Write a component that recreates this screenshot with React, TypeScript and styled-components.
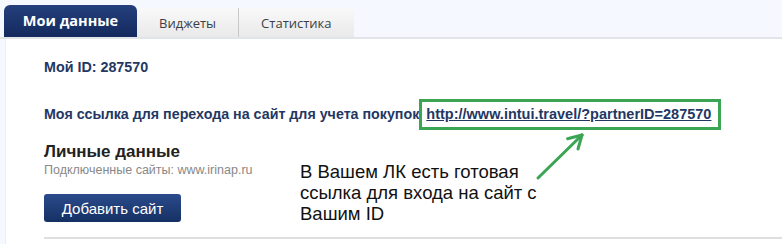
import React from "react";
import styled, { createGlobalStyle } from "styled-components";

const Global = createGlobalStyle`
  html, body { margin: 0; padding: 0; background: #f5f8fe; }
  body { font-family: Arial, "Liberation Sans", sans-serif; }
`;

const Page = styled.div`
  position: relative;
  width: 782px;
  height: 244px;
  overflow: hidden;
  background: #f5f8fe;
`;

const TabBar = styled.div`
  display: flex;
  align-items: flex-end;
  height: 37px;
  padding-left: 4px;
  border-bottom: 2px solid #e1e4e9;
`;

const Tab = styled.div<{ $active?: boolean; $sep?: boolean }>`
  display: flex;
  align-items: center;
  justify-content: center;
  box-sizing: border-box;
  font-family: "Open Sans", "Liberation Sans", sans-serif;
  font-size: ${(p) => (p.$active ? "14.5px" : "13px")};
  height: ${(p) => (p.$active ? "32px" : "29px")};
  padding-bottom: ${(p) => (p.$active ? "1px" : "0")};
  width: ${(p) => (p.$active ? "133px" : "auto")};
  padding-left: ${(p) => (p.$active ? "0" : "22px")};
  padding-right: ${(p) => (p.$active ? "0" : "22px")};
  border-radius: ${(p) => (p.$active ? "6px 6px 0 0" : "0")};
  font-weight: ${(p) => (p.$active ? 700 : 400)};
  color: ${(p) => (p.$active ? "#ffffff" : "#3b3f45")};
  background: ${(p) =>
    p.$active
      ? "linear-gradient(#243f7c, #142a5e)"
      : "linear-gradient(#f9f9f9, #e9e9e9)"};
  border-right: ${(p) => (p.$sep ? "1px solid #c9c9c9" : "none")};
`;

const Panel = styled.div`
  margin-left: 5px;
  background: #ffffff;
  height: 205px;
  padding-left: 38px;
  box-sizing: border-box;
  border-left: 1px solid #eceef3;
`;

const IdLine = styled.div`
  padding-top: 20px;
  font-size: 14.3px;
  font-weight: 700;
  color: #233763;
  line-height: 16px;
`;

const LinkRow = styled.div`
  display: flex;
  align-items: center;
  gap: 0;
  margin-top: 24px;
  font-size: 14.25px;
  font-weight: 700;
  color: #233763;
  line-height: 17px;
`;

const Highlight = styled.span`
  border: 3px solid #3ba553;
  padding: 4px 7px 4px 4px;
  font-size: 14.5px;
  line-height: 17px;
`;

const PartnerLink = styled.a`
  color: #233763;
  text-decoration: underline;
`;

const SectionTitle = styled.div`
  margin-top: 12px;
  font-size: 17px;
  font-weight: 700;
  color: #222;
  line-height: 20px;
`;

const Sites = styled.div`
  font-size: 12.5px;
  color: #888;
  line-height: 15px;
  margin-top: 1px;
`;

const Button = styled.button`
  margin-top: 16px;
  width: 137px;
  height: 28px;
  border: none;
  border-radius: 3px;
  background: linear-gradient(#2a4b8c, #163063);
  color: #fff;
  font-family: Arial, "Liberation Sans", sans-serif;
  font-size: 15px;
  padding: 0;
  display: block;
`;

const Divider = styled.div`
  margin-top: 15px;
  height: 2px;
  background: #dedede;
`;

const Note = styled.div`
  position: absolute;
  left: 300px;
  top: 161px;
  font-family: Arial, "Liberation Sans", sans-serif;
  font-size: 18.5px;
  line-height: 21px;
  color: #111;
`;

const Arrow = styled.svg`
  position: absolute;
  left: 530px;
  top: 125px;
`;

export default function App() {
  return (
    <Page>
      <Global />
      <TabBar>
        <Tab $active>Мои данные</Tab>
        <Tab $sep>Виджеты</Tab>
        <Tab>Статистика</Tab>
      </TabBar>
      <Panel>
        <IdLine>Мой ID: 287570</IdLine>
        <LinkRow>
          <span>Моя ссылка для перехода на сайт для учета покупок</span>
          <Highlight>
            <PartnerLink href="#">http://www.intui.travel/?partnerID=287570</PartnerLink>
          </Highlight>
        </LinkRow>
        <SectionTitle>Личные данные</SectionTitle>
        <Sites>Подключенные сайты: www.irinap.ru</Sites>
        <Button>Добавить сайт</Button>
        <Divider />
      </Panel>
      <Note>
        В Вашем ЛК есть готовая
        <br />
        ссылка для входа на сайт с
        <br />
        Вашим ID
      </Note>
      <Arrow width="60" height="60" viewBox="0 0 60 60">
        <g stroke="#3ba553" strokeWidth="3" strokeLinecap="round" fill="none">
          <line x1="8" y1="53" x2="52" y2="10" />
          <line x1="52" y1="10" x2="37.5" y2="13.7" />
          <line x1="52" y1="10" x2="48" y2="24" />
        </g>
      </Arrow>
    </Page>
  );
}
